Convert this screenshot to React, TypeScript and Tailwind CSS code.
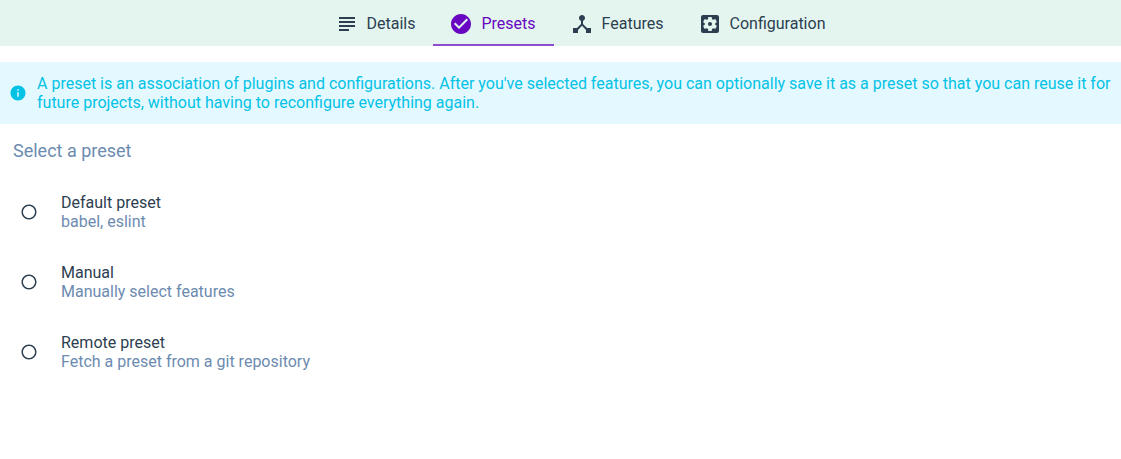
import { useState } from 'react';
import {
  MdCheckCircle,
  MdDeviceHub,
  MdInfo,
  MdRadioButtonChecked,
  MdRadioButtonUnchecked,
  MdSettingsApplications,
  MdSubject,
} from 'react-icons/md';

const tabs = [
  { label: 'Details', Icon: MdSubject },
  { label: 'Presets', Icon: MdCheckCircle },
  { label: 'Features', Icon: MdDeviceHub },
  { label: 'Configuration', Icon: MdSettingsApplications },
];

const presets = [
  { id: 'default', name: 'Default preset', description: 'babel, eslint' },
  { id: 'manual', name: 'Manual', description: 'Manually select features' },
  { id: 'remote', name: 'Remote preset', description: 'Fetch a preset from a git repository' },
];

export default function App() {
  const [active, setActive] = useState('Presets');
  const [preset, setPreset] = useState('');

  return (
    <div className="min-h-screen bg-white font-[Roboto,sans-serif] text-base text-[#2c3e50]">
      <nav className="flex justify-center bg-[#e4f5ef] pl-[41px]">
        {tabs.map(({ label, Icon }) => (
          <button
            key={label}
            type="button"
            onClick={() => setActive(label)}
            className={`flex h-[46px] items-center gap-2 border-b-2 pt-1 pr-[18px] pl-4 ${
              active === label ? 'border-[#8f4dd1] text-[#6806c1]' : 'border-transparent'
            }`}
          >
            <Icon className="size-6" aria-hidden="true" />
            {label}
          </button>
        ))}
      </nav>

      <main>
        <div className="mt-4 flex items-center gap-2.5 bg-[#e4f9ff] py-3 pr-2 pl-[9px] text-[#03c2e6]">
          <MdInfo className="size-[18px] shrink-0" aria-hidden="true" />
          <p className="leading-[19px]">
            A preset is an association of plugins and configurations. After you've selected features, you can
            optionally save it as a preset so that you can reuse it for future projects, without having to
            reconfigure everything again.
          </p>
        </div>

        <fieldset>
          <legend className="px-[13px] pt-4 pb-[15px] text-lg leading-[22px] text-[#6c8bb0]">Select a preset</legend>
          {presets.map(({ id, name, description }) => {
            const Mark = preset === id ? MdRadioButtonChecked : MdRadioButtonUnchecked;
            return (
              <label key={id} className="flex h-[70px] cursor-pointer items-center gap-[23px] px-5">
                <span className="grid shrink-0">
                  <input
                    type="radio"
                    name="preset"
                    value={id}
                    checked={preset === id}
                    onChange={() => setPreset(id)}
                    className="col-start-1 row-start-1 size-[18px] appearance-none rounded-full"
                  />
                  <Mark className="pointer-events-none col-start-1 row-start-1 size-[18px]" aria-hidden="true" />
                </span>
                <span className="flex flex-col leading-[19px]">
                  <span>{name}</span>
                  <span className="text-[#6c8bb0]">{description}</span>
                </span>
              </label>
            );
          })}
        </fieldset>
      </main>
    </div>
  );
}
